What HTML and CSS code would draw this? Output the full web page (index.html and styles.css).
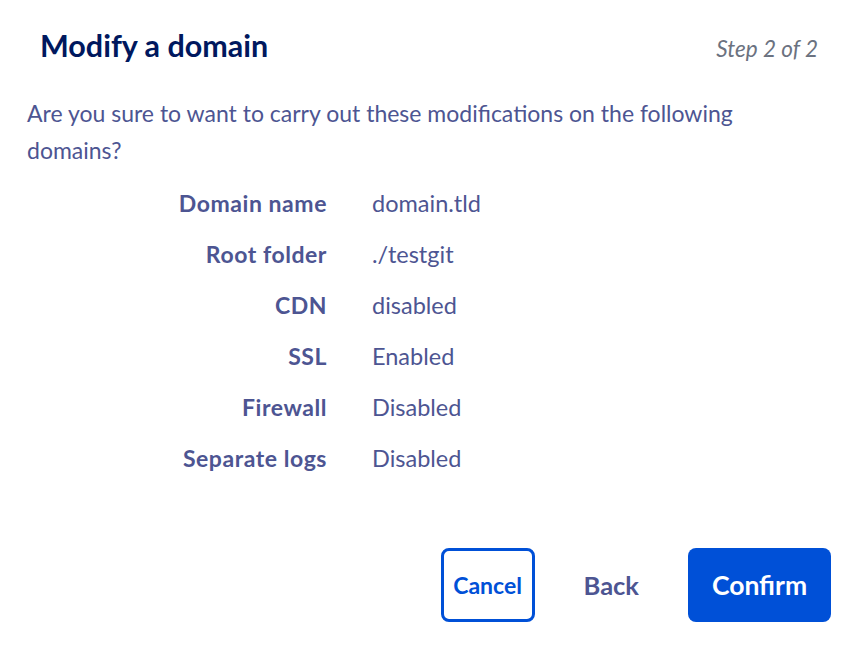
FILE: index.html
```html
<!DOCTYPE html>
<html lang="en">
<head>
<meta charset="utf-8">
<link rel="stylesheet" href="styles.css">
</head>
<body>
<div class="modal">
  <div class="header">
    <h1 class="title">Modify a domain</h1>
    <span class="step">Step 2 of 2</span>
  </div>
  <p class="intro">Are you sure to want to carry out these modifications on the following domains?</p>
  <dl class="summary">
    <dt>Domain name</dt><dd>domain.tld</dd>
    <dt>Root folder</dt><dd>./testgit</dd>
    <dt>CDN</dt><dd>disabled</dd>
    <dt>SSL</dt><dd>Enabled</dd>
    <dt>Firewall</dt><dd>Disabled</dd>
    <dt>Separate logs</dt><dd>Disabled</dd>
  </dl>
  <div class="actions">
    <button class="btn btn-outline">Cancel</button>
    <button class="btn btn-link">Back</button>
    <button class="btn btn-primary">Confirm</button>
  </div>
</div>
</body>
</html>
```
FILE: styles.css
```css
html, body {
  margin: 0;
  padding: 0;
  background: #ffffff;
}
body {
  font-family: "Lato", "Open Sans", sans-serif;
  color: #4d5592;
}
.modal {
  width: 859px;
  height: 645px;
  box-sizing: border-box;
  padding: 24px 28px 0 27px;
}
.header {
  display: flex;
  justify-content: space-between;
  align-items: baseline;
  padding-left: 13px;
  padding-right: 13px;
}
.title {
  margin: 0;
  font-size: 30.5px;
  font-weight: 700;
  color: #00185e;
  line-height: 42px;
}
.step {
  font-size: 22.5px;
  font-style: italic;
  color: #6b7280;
}
.intro {
  margin: 29px 0 0 0;
  font-size: 23px;
  line-height: 37px;
  width: 740px;
}
.summary {
  display: grid;
  grid-template-columns: 300px auto;
  column-gap: 45px;
  row-gap: 0;
  margin: 9px 0 0 0;
  font-size: 23.5px;
  line-height: 51px;
}
.summary dt {
  font-weight: 700;
  text-align: right;
  font-size: 23px;
  letter-spacing: 0.55px;
}
.summary dd {
  margin: 0;
}
.actions {
  display: flex;
  justify-content: flex-end;
  align-items: center;
  margin-top: 64px;
}
.btn {
  font-family: inherit;
  font-weight: 700;
  height: 74px;
  border-radius: 8px;
  cursor: pointer;
  box-sizing: border-box;
}
.btn-outline {
  width: 94px;
  border: 3px solid #0050d7;
  background: #ffffff;
  color: #0050d7;
  font-size: 23px;
  padding: 0;
}
.btn-link {
  border: none;
  background: none;
  color: #4d5592;
  font-size: 25.5px;
  padding: 0 49px;
}
.btn-primary {
  width: 143px;
  border: none;
  background: #0050d7;
  color: #ffffff;
  font-size: 26.5px;
  padding: 0;
}
```
